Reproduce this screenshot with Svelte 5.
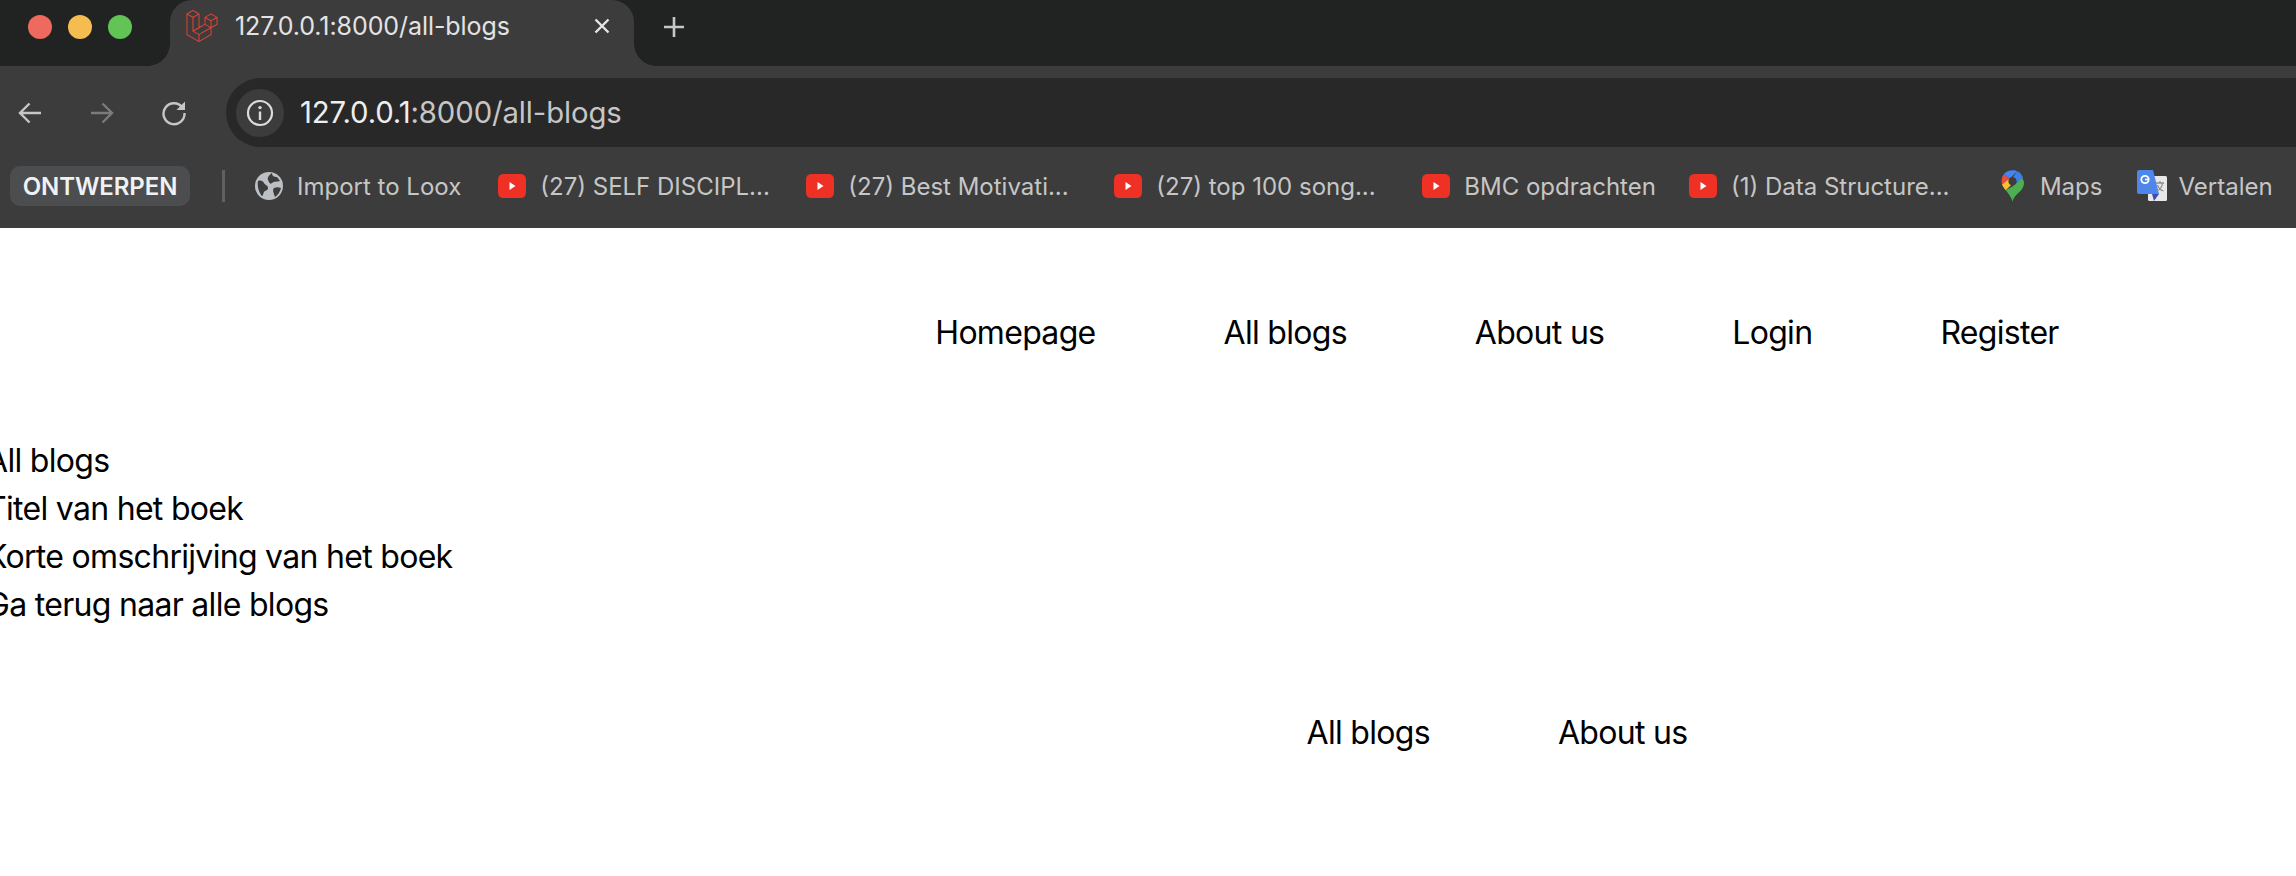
<script>
  const bookmarks = [
    { label: '(27) SELF DISCIPL...' },
    { label: '(27) Best Motivati...' },
    { label: '(27) top 100 song...' },
    { label: 'BMC opdrachten', natural: true },
    { label: '(1) Data Structure...' }
  ];
  const laravel = "M23.642 5.43a.364.364 0 01.014.1v5.149c0 .135-.073.26-.189.326l-4.323 2.49v4.934a.378.378 0 01-.188.326L9.93 23.949a.316.316 0 01-.066.027c-.008.002-.016.008-.024.01a.348.348 0 01-.192 0c-.011-.002-.02-.008-.03-.012-.02-.008-.042-.014-.062-.025L.533 18.755a.376.376 0 01-.189-.327V2.974c0-.033.005-.066.014-.098.003-.012.01-.02.014-.032a.369.369 0 01.023-.058c.004-.013.015-.022.023-.033l.033-.045c.012-.01.025-.018.037-.027.014-.012.027-.024.041-.034H.53L5.043.05a.375.375 0 01.375 0L9.93 2.647h.002c.015.01.027.021.04.033l.038.027c.013.014.02.03.033.045.008.011.02.021.025.033.01.02.017.038.024.058.003.011.01.021.013.032.01.031.014.064.014.098v9.652l3.76-2.164V5.527c0-.033.004-.066.013-.098.003-.01.01-.02.013-.032a.487.487 0 01.024-.059c.007-.012.018-.02.025-.033.012-.015.021-.03.033-.043.012-.012.025-.02.037-.028.014-.01.026-.023.041-.032h.001l4.513-2.598a.375.375 0 01.375 0l4.513 2.598c.016.01.027.021.042.031.012.01.025.018.036.028.013.014.022.03.034.044.008.012.019.021.024.033.011.02.018.04.024.06.006.01.012.021.015.032zm-.74 5.032V6.179l-1.578.908-2.182 1.256v4.283zm-4.51 7.75v-4.287l-2.147 1.225-6.126 3.498v4.325zM1.093 3.624v14.588l8.273 4.761v-4.325l-4.322-2.445-.002-.003H5.04c-.014-.01-.025-.021-.04-.031-.011-.01-.024-.018-.035-.027l-.001-.002c-.013-.012-.021-.025-.031-.04-.01-.011-.021-.022-.028-.036h-.002c-.008-.014-.013-.031-.02-.047-.006-.016-.014-.027-.018-.043a.49.49 0 01-.008-.057c-.002-.014-.006-.027-.006-.041V5.789l-2.18-1.257zM5.23.81L1.47 2.974l3.76 2.164 3.758-2.164zm1.956 13.505l2.182-1.256V3.624l-1.58.91-2.182 1.255v9.435zm11.581-10.95l-3.76 2.163 3.76 2.163 3.759-2.164zm-.376 4.978L16.21 7.087 14.63 6.18v4.283l2.182 1.256 1.58.908zm-8.65 9.654l5.514-3.148 2.756-1.572-3.757-2.163-4.323 2.489-3.941 2.27z";
</script>

<div class="window">
  <header class="chrome">
    <div class="tabstrip">
      <div class="lights">
        <span class="light red"></span>
        <span class="light yellow"></span>
        <span class="light green"></span>
      </div>
      <div class="tab">
        <svg class="favicon" viewBox="0 0 24 24"><path d={laravel} fill="#de4534" /></svg>
        <span class="tab-title">127.0.0.1:8000/all-blogs</span>
        <svg class="close" viewBox="0 0 18 18"><path d="M2.5 2.5l13 13M15.5 2.5l-13 13" stroke="#e6e6e6" stroke-width="2.4" fill="none" /></svg>
      </div>
      <svg class="plus" viewBox="0 0 22 22"><path d="M11 1v20M1 11h20" stroke="#c7c7c7" stroke-width="2.6" fill="none" /></svg>
    </div>

    <div class="toolbar">
      <svg class="nav-icon back" viewBox="0 0 26 26"><path d="M24 13H3M12.5 3.5L3 13l9.5 9.5" stroke="#c4c6c8" stroke-width="2.4" fill="none" /></svg>
      <svg class="nav-icon forward" viewBox="0 0 26 26"><path d="M2 13h21M13.5 3.5L23 13l-9.5 9.5" stroke="#7b7b7b" stroke-width="2.4" fill="none" /></svg>
      <svg class="nav-icon reload" viewBox="0 0 26 26"><path d="M21.5 7.5A10.5 10.5 0 1 0 23.5 13" stroke="#c4c6c8" stroke-width="2.4" fill="none" /><path d="M24 1.5V10h-8.5z" fill="#c4c6c8" /></svg>
      <div class="omnibox">
        <span class="info">
          <svg viewBox="0 0 28 28"><circle cx="14" cy="14" r="12" stroke="#dcdcdc" stroke-width="2.2" fill="none" /><circle cx="14" cy="8.6" r="1.7" fill="#dcdcdc" /><path d="M14 12.5v8.5" stroke="#dcdcdc" stroke-width="2.4" /></svg>
        </span>
        <span class="url"><span class="host">127.0.0.1</span>:8000/all-blogs</span>
      </div>
    </div>

    <div class="bookmarks">
      <span class="pill">ONTWERPEN</span>
      <span class="divider"></span>
      <span class="bm loox">
        <svg class="globe" viewBox="0 0 28 28">
          <circle cx="14" cy="14" r="14" fill="#bcc0c4" />
          <path d="M3 9c3-1 5 0 6 2s4 2 4 5-3 2-4 4-1 4-2 4c-3-3-5-10-4-15zM17 1c0 3 2 4 5 4l3 4c-3 1-6 0-8 2s-3-1-4-3 1-5 4-7zM19 16c2-1 5-1 7 0-1 4-3 7-6 9-1-3-3-7-1-9z" fill="#3c3c3c" />
        </svg>
        Import to Loox
      </span>
      {#each bookmarks as b}
        <span class="bm">
          <svg class="yt" viewBox="0 0 28 24">
            <path d="M6 0h16c4 0 6 2 6 6v12c0 4-2 6-6 6H6c-4 0-6-2-6-6V6c0-4 2-6 6-6z" fill="#ee3124" />
            <path d="M11.500 8l6 4-6 4z" fill="#fff" />
          </svg>
          <span class="label" class:natural={b.natural}>{b.label}</span>
        </span>
      {/each}
      <span class="bm maps">
        <svg class="pin" viewBox="0 0 24 33">
          <path d="M12 33c-1-5-4-8-7-12l7-4 10-9c1 2 2 3 2 5 0 3-1 5-3 8-4 4-8 7-9 12z" fill="#4caf50" />
          <path d="M5 21C3 19 2 17 1 15l7-6 5 4z" fill="#fbc02d" />
          <path d="M1 15C0 10 1 7 3 4l6 5z" fill="#e2503f" />
          <path d="M3 4C6 1 9 0 12 0c2 0 3 0 5 1L9 9z" fill="#4285f4" />
          <path d="M17 1c3 1 5 4 6 7l-7 5-4-5z" fill="#3f7fe8" />
          <circle cx="12" cy="11.5" r="4.2" fill="#3c3c3c" />
        </svg>
        Maps
      </span>
      <span class="bm translate">
        <svg class="gt" viewBox="0 0 30 32">
          <rect x="11" y="6" width="19" height="25" rx="1.5" fill="#e8e8e8" />
          <path d="M2 0h14l6 24H2a2 2 0 0 1-2-2V2a2 2 0 0 1 2-2z" fill="#4f86ec" />
          <path d="M15 24h7l-5 7z" fill="#3d4fb0" />
          <path d="M19 13h8M23 11v2M25.5 13c-.5 4-3 7-6 8M20.500 15c1 3 3 5 6 6" stroke="#8a9097" stroke-width="1.300" fill="none" />
          <circle cx="8" cy="9.500" r="3.700" stroke="#fff" stroke-width="1.800" fill="none" />
          <path d="M8 9.500h4" stroke="#fff" stroke-width="1.600" />
        </svg>
        Vertalen
      </span>
    </div>
  </header>

  <div class="page">
    <nav class="top-nav">
      <a href="#home">Homepage</a>
      <a href="#blogs">All blogs</a>
      <a href="#about">About us</a>
      <a href="#login">Login</a>
      <a href="#register">Register</a>
    </nav>
    <main>
      <p>All blogs</p>
      <p>Titel van het boek</p>
      <p>Korte omschrijving van het boek</p>
      <p>Ga terug naar alle blogs</p>
    </main>
    <footer>
      <a href="#blogs">All blogs</a>
      <a href="#about">About us</a>
    </footer>
  </div>
</div>

<style>
  :global(body) { margin: 0; background: #fff; }
  .window { width: 2296px; height: 876px; overflow: hidden; font-family: Inter, "Noto Sans", sans-serif; }

  .chrome { background: #3c3c3c; height: 228px; display: flex; flex-direction: column; }

  .tabstrip { height: 66px; background: #212322; display: flex; align-items: flex-start; flex: none; }
  .lights { display: flex; gap: 16px; padding: 15px 0 0 28px; width: 170px; box-sizing: border-box; flex: none; }
  .light { width: 24px; height: 24px; border-radius: 50%; }
  .red { background: #ee6a5f; }
  .yellow { background: #f5bd4f; }
  .green { background: #61c454; }

  .tab {
    position: relative; width: 464px; height: 66px; background: #3c3c3c; flex: none; box-sizing: border-box;
    border-radius: 22px 22px 0 0; display: flex; align-items: center; padding: 0 0 14px 16px;
  }
  .tab::before, .tab::after { content: ""; position: absolute; bottom: 0; width: 22px; height: 22px; }
  .tab::before { left: -22px; background: radial-gradient(circle at 0 0, transparent 21.500px, #3c3c3c 22px); }
  .tab::after { right: -22px; background: radial-gradient(circle at 100% 0, transparent 21.500px, #3c3c3c 22px); }
  .favicon { width: 32px; height: 32px; flex: none; }
  .tab-title { margin-left: 17px; font-size: 25px; color: #e3e3e3; letter-spacing: -0.07px; white-space: nowrap; }
  .close { width: 18px; height: 18px; position: absolute; left: 423px; top: 17px; }
  .plus { width: 22px; height: 22px; margin: 16px 0 0 29px; flex: none; }

  .toolbar { height: 81px; display: flex; align-items: center; padding-top: 12px; box-sizing: border-box; flex: none; position: relative; }
  .nav-icon { width: 26px; height: 26px; flex: none; }
  .back { margin-left: 17px; }
  .forward { margin-left: 46px; }
  .reload { margin-left: 46px; }
  .omnibox {
    margin-left: 39px; flex: 1; height: 69px; background: #282828; border-radius: 34.500px 0 0 34.500px;
    display: flex; align-items: center; padding-left: 10px;
  }
  .info { width: 48px; height: 48px; border-radius: 50%; background: #3c3c3c; display: flex; align-items: center; justify-content: center; flex: none; }
  .info svg { width: 28px; height: 28px; }
  .url { margin-left: 16px; font-size: 29.3px; color: #c6c6c6; white-space: nowrap; letter-spacing: -0.1px; padding-bottom: 1px; }
  .host { color: #eeeeee; }

  .bookmarks { flex: 1; display: flex; align-items: center; padding: 0 0 3px 10px; font-size: 24px; color: #c6c6c6; white-space: nowrap; }
  .pill {
    width: 180px; height: 40px; box-sizing: border-box; background: #4c4d4f; border-radius: 10px; color: #f0f1f3; font-weight: 600;
    display: flex; align-items: center; justify-content: center; flex: none; font-size: 24px; letter-spacing: -0.1px;
  }
  .divider { width: 3px; height: 32px; background: #5f6062; margin: 0 30px 0 32px; flex: none; }
  .bm { display: flex; align-items: center; gap: 14px; margin-right: 30px; flex: none; }
  .bm.loox { margin-right: 37px; }
  .globe { width: 28px; height: 28px; }
  .yt { width: 28px; height: 24px; flex: none; }
  .label { width: 236px; overflow: hidden; }
  .label.natural { width: auto; margin-right: 3px; }
  .maps { gap: 16px; margin-right: 35px; margin-left: 4px; }
  .pin { width: 23px; height: 32px; }
  .gt { width: 30px; height: 32px; }
  .translate { margin-right: 0; gap: 11px; }

  .page { margin-left: -14px; width: 3022px; font-size: 32px; line-height: 48px; color: #000; letter-spacing: -0.7px; padding-top: 1px; }
  .page a { color: inherit; text-decoration: none; }
  .top-nav { display: flex; justify-content: center; gap: 128px; padding: 80px 0; }
  main p { margin: 0; }
  footer { display: flex; justify-content: center; gap: 128px; padding-top: 80px; }
</style>
